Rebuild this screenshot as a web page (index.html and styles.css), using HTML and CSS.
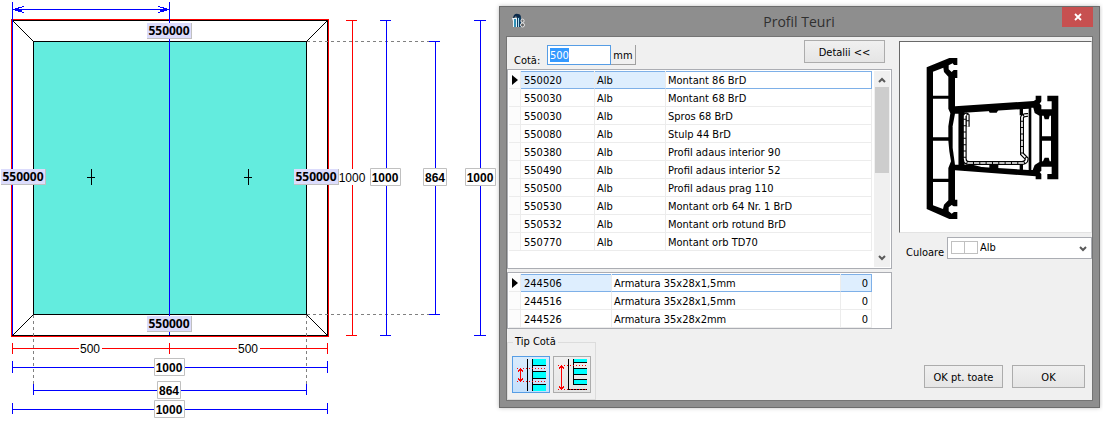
FILE: index.html
```html
<!DOCTYPE html>
<html lang="ro">
<head>
<meta charset="utf-8">
<title>Profil Teuri</title>
<link rel="stylesheet" href="styles.css">
</head>
<body>
<main class="workspace">
  <svg class="drawing" viewBox="0 0 499 423" width="499" height="423" role="img" aria-label="Schiță fereastră 1000 x 1000">
    <!-- glass and frame -->
    <rect x="33" y="41" width="274" height="274" fill="#63ecde"/>
    <g fill="none" shape-rendering="crispEdges">
      <rect x="33.5" y="41.5" width="273" height="273" stroke="#000"/>
      <rect x="12.5" y="20.5" width="315" height="315" stroke="#000"/>
      <path class="red" d="M11.500 19.500H328.500V336.500H11.500Z"/>
      <path stroke="#000" d="M13 21L33 41M327 21L307 41M13 335L33 315M327 335L307 315"/>
      <path class="guide" d="M307 41.500H429M307 314.500H429M33.500 315V384M306.500 315V384"/>
      <path stroke="#000" d="M87 177.500H95M91.500 169V185M244 177.500H252M248.500 169V185"/>
      <path class="blue" d="M12.500 2V335M169.500 2V335M13 9.500H169"/>
      <path class="blue" d="M13 9.500L24 6.500M13 9.500L24 12.500M169 9.500L158 6.500M169 9.500L158 12.500M15 10.500H22M160 10.500H167"/>
      <!-- dimension lines -->
      <path class="red" d="M352.500 20V336M346 20.500H357M346 335.500H357M12 348.500H327M12.500 343V354M169.500 343V354M327.500 343V354"/>
      <path class="blue" d="M386.500 20V336M380 20.500H391M380 335.500H391M435.500 41V315M429 41.500H440M429 314.500H440M480.500 20V336M474 20.500H486M474 335.500H486"/>
      <path class="blue" d="M12 367.500H327M12.500 361V373M327.500 361V373M33 390.500H306M33.500 384V395M306.500 384V395M12 409.500H327M12.500 403V414M327.500 403V414"/>
    </g>
    <g class="tag">
      <path class="tag-edge" d="M147 23h45v16h-45zM147 316h45v16h-45zM1 169h45v16H1zM294 169h45v16h-45z"/>
      <path class="tag-fill" d="M147 23h44v15h-44zM147 316h44v15h-44zM1 169h44v15H1zM294 169h44v15h-44z"/>
      <text x="169" y="35">550000</text>
      <text x="169" y="328">550000</text>
      <text x="23" y="181">550000</text>
      <text x="316" y="181">550000</text>
    </g>
    <g class="plain">
      <path fill="#fff" d="M339 169h28v16h-28zM79 341h23v14H79zM237 341h23v14h-23z"/>
      <text x="352" y="182">1000</text>
      <text x="90" y="353">500</text>
      <text x="248" y="353">500</text>
    </g>
    <g class="dim">
      <path class="dim-box" d="M370.500 168.500h30v17h-30zM423.500 168.500h23v17h-23zM465.500 168.500h30v17h-30zM154.500 358.500h30v17h-30zM157.500 381.500h23v17h-23zM154.500 400.500h30v17h-30z"/>
      <text x="385" y="182">1000</text>
      <text x="435" y="182">864</text>
      <text x="480" y="182">1000</text>
      <text x="169" y="372">1000</text>
      <text x="169" y="395">864</text>
      <text x="169" y="414">1000</text>
    </g>
  </svg>

  <section class="dialog" role="dialog" aria-labelledby="dialog-title">
    <header class="titlebar">
      <svg class="app-icon" viewBox="0 0 14 16" width="14" height="16" aria-hidden="true">
        <path d="M1 5Q2 0 6 1Q9 1 9 5L7 4L5 5L4 3L2 5Z" fill="#0b2a4a"/>
        <path d="M0 5h5v9H1V8z" fill="#e8f4fb"/><path d="M2 6h2v8H2z" fill="#2f8fb5"/>
        <path d="M5 4h4v10H5z" fill="#0d3d63"/><path d="M6 5h1v9H6z" fill="#a8dcf0"/>
        <ellipse cx="10.500" cy="7.800" rx="1.600" ry="1.700" fill="#777" stroke="#e6e6e6"/>
        <ellipse cx="10.500" cy="12" rx="2" ry="2" fill="#666" stroke="#e6e6e6"/>
      </svg>
      <h1 class="title" id="dialog-title">Profil Teuri</h1>
      <button class="close" type="button" aria-label="Închide">
        <svg viewBox="0 0 8 8" width="8" height="8"><path d="M1 1L7 7M7 1L1 7" stroke="#fff" stroke-width="1.800"/></svg>
      </button>
    </header>

    <div class="client">
      <div class="left">
        <div class="toolbar">
          <label class="cota-label" for="cota">Cotă:</label>
          <input class="cota" id="cota" type="text" value="500">
          <button class="unit" type="button">mm</button>
          <button class="btn details" type="button">Detalii &lt;&lt;</button>
        </div>

        <div class="list profiles">
          <table class="grid">
            <colgroup><col class="c-mark"><col class="c-code"><col class="c-color"><col></colgroup>
            <tbody>
              <tr class="current"><td><i class="marker"></i></td><td class="hl">550020</td><td class="hl">Alb</td><td>Montant 86 BrD</td></tr>
              <tr><td></td><td>550030</td><td>Alb</td><td>Montant 68 BrD</td></tr>
              <tr><td></td><td>550030</td><td>Alb</td><td>Spros 68 BrD</td></tr>
              <tr><td></td><td>550080</td><td>Alb</td><td>Stulp 44 BrD</td></tr>
              <tr><td></td><td>550380</td><td>Alb</td><td>Profil adaus interior 90</td></tr>
              <tr><td></td><td>550490</td><td>Alb</td><td>Profil adaus interior 52</td></tr>
              <tr><td></td><td>550500</td><td>Alb</td><td>Profil adaus prag 110</td></tr>
              <tr><td></td><td>550530</td><td>Alb</td><td>Montant orb 64 Nr. 1 BrD</td></tr>
              <tr><td></td><td>550532</td><td>Alb</td><td>Montant orb rotund BrD</td></tr>
              <tr><td></td><td>550770</td><td>Alb</td><td>Montant orb TD70</td></tr>
            </tbody>
          </table>
          <div class="scroll" aria-hidden="true">
            <svg viewBox="0 0 8 6" width="8" height="6"><path d="M1 5L4 2L7 5" class="chev"/></svg>
            <div class="track"><div class="thumb"></div></div>
            <svg viewBox="0 0 8 6" width="8" height="6"><path d="M1 1L4 4L7 1" class="chev"/></svg>
          </div>
        </div>

        <div class="list steels">
          <table class="grid">
            <colgroup><col class="c-mark"><col class="c-steel"><col><col class="c-qty"></colgroup>
            <tbody>
              <tr class="current"><td><i class="marker"></i></td><td class="hl">244506</td><td>Armatura 35x28x1,5mm</td><td class="hl num">0</td></tr>
              <tr><td></td><td>244516</td><td>Armatura 35x28x1,5mm</td><td class="num">0</td></tr>
              <tr><td></td><td>244526</td><td>Armatura 35x28x2mm</td><td class="num">0</td></tr>
            </tbody>
          </table>
        </div>

        <fieldset class="kind">
          <legend>Tip Cotă</legend>
          <button class="kind-btn active" type="button" aria-label="Cotă la ax" aria-pressed="true">
            <svg viewBox="24 21 108 105" width="36" height="35" shape-rendering="crispEdges">
              <path fill="#0ff" d="M84 27h39v18H84zM84 66h39v18H84zM84 105h39v18H84z"/>
              <path d="M66 27h3v96h-3zM81 27h3v96h-3zM84 45h39v3H84zM84 63h39v3H84zM84 84h39v3H84zM84 102h39v3H84z"/>
              <path class="dots" d="M36 55.500H123M36 94.500H123"/>
              <path class="arrow" d="M46.500 57V93M39 64.500L46.500 57L54 64.500M39 85.500L46.500 93L54 85.500"/>
            </svg>
          </button>
          <button class="kind-btn" type="button" aria-label="Cotă la exterior" aria-pressed="false">
            <svg viewBox="144 21 108 105" width="36" height="35" shape-rendering="crispEdges">
              <path fill="#0ff" d="M204 27h39v9h-39zM204 57h39v15h-39zM204 90h39v12h-39z"/>
              <path d="M186 27h3v90h54v3h-57zM201 27h3v75h39v3h-42zM204 36h39v3h-39zM204 54h39v3h-39zM204 72h39v3h-39zM204 87h39v3h-39z"/>
              <path class="dots" d="M156 46.500H243M156 118.500H243"/>
              <path class="arrow" d="M166.500 48V117M159 55.500L166.500 48L174 55.500M159 109.500L166.500 117L174 109.500"/>
            </svg>
          </button>
        </fieldset>
      </div>

      <div class="right">
        <div class="preview">
          <svg viewBox="17 22 570 570" width="190" height="190" role="img" aria-label="Secțiune profil">
            <path d="M97 98L165 70H189V91H179L175 86L163 92V104L172 112L178 106H189V130H182V215L418 199L424 195V183H441V200L436 207L441 212V224H472V200H459V183H492V434H459V418H472V396H441V409L436 412L441 418V434H424V425L182 407V495H189V515H178L172 511L163 518V530L172 537L179 532H189V553H165L97 523Z"/>
            <g fill="#fff">
              <path d="M116 111L147 99L149 112L162 126V183H116ZM116 192H162V222L168 236L162 275V308H116ZM116 318H162L165 350L170 380L162 400V432H116ZM116 442H162V497L149 510L146 523L116 512Z"/>
              <path d="M182 237H193V390H182L175 340V275Z"/>
              <path d="M210 234L403 222V406L210 394Z"/>
              <path d="M411 219H417L421 235L435 243V382L421 391L415 406H411Z"/>
              <path d="M443 243H448L451 254H463L466 243H470V305H443ZM443 318H470V380H466L463 369H451L446 380H443Z"/>
            </g>
            <path d="M193 232H210V396H193ZM282 226H312L307 234H286ZM285 388H312V402H285ZM376 222H386V242H376ZM376 386H386V406H376ZM210 390H235L285 403H210Z"/>
            <path class="steel" d="M220 276V242Q216 237 211 243V372Q211 385 224 385H384Q398 383 397 372L383 358V248Q386 240 401 241"/>
            <path class="steel-core" d="M220 276V242Q216 237 211 243V372Q211 385 224 385H384Q398 383 397 372L383 358V248Q386 240 401 241"/>
          </svg>
        </div>
        <div class="color-row">
          <label for="culoare">Culoare</label>
          <div class="combo">
            <select id="culoare"><option>Alb</option></select>
            <span class="swatch"></span>
            <svg class="combo-arrow" viewBox="0 0 8 6" width="8" height="6" aria-hidden="true"><path d="M1 1L4 4L7 1" class="chev"/></svg>
          </div>
        </div>
        <div class="actions">
          <button class="btn all" type="button">OK pt. toate</button>
          <button class="btn ok" type="button">OK</button>
        </div>
      </div>
    </div>
  </section>
</main>
</body>
</html>
```
FILE: styles.css
```css
* { box-sizing: border-box; }

body {
  margin: 0;
  background: #fff;
  color: #000;
  font: 11px/14px Tahoma, "DejaVu Sans Condensed", sans-serif;
}

button, input, select { font: inherit; color: inherit; margin: 0; }

.workspace { display: flex; align-items: flex-start; }

/* Window drawing */
.drawing { display: block; flex: none; }
.red { stroke: #f00; }
.blue { stroke: #00f; }
.guide { stroke: #808080; stroke-dasharray: 3 3; }
.drawing text { text-anchor: middle; font: 12px "Liberation Sans", Arial, sans-serif; }
.drawing .tag text { font: bold 12px "Noto Sans", Tahoma, sans-serif; }
.drawing .dim text { font-weight: bold; }
.tag-edge { fill: #c0c0c0; }
.tag-fill { fill: #dcdcfc; }
.dim-box { fill: #fff; stroke: #c0c0c0; }

/* Dialog */
.dialog {
  flex: 1;
  margin: 6px 3px 0 0;
  padding: 0 6px 6px;
  background: #8e8e8e;
  border: 1px solid #6c6c6c;
  box-shadow: 0 0 4px rgba(0, 0, 0, 0.25);
}
.titlebar { display: flex; align-items: flex-start; height: 29px; }
.app-icon { margin: 6px 10px 0 6px; }
.title {
  flex: 1;
  margin: 0;
  text-align: center;
  font: 14px/29px "Open Sans", "Segoe UI", sans-serif;
  color: #303030;
}
.close {
  display: flex;
  align-items: center;
  justify-content: center;
  width: 31px;
  height: 20px;
  padding: 0;
  border: 0;
  background: #c75050;
}
.client {
  display: flex;
  gap: 7px;
  border: 1px solid #747474;
  background: #f0f0f0;
}
.left { flex: 1; min-width: 0; }
.right { display: flex; flex-direction: column; flex: none; width: 193px; padding-top: 4px; }

.toolbar { display: flex; height: 32px; padding: 3px 7px 0; align-items: flex-start; }
.cota-label { width: 33px; margin-top: 14px; }
.cota {
  width: 64px;
  height: 20px;
  margin-top: 5px;
  padding: 0 2px;
  border: 1px solid #569de5;
  background: linear-gradient(#39f, #39f) 2px 2px / 19px 14px no-repeat #fff;
  color: #fff;
  outline: 0;
}
.unit {
  width: 25px;
  height: 20px;
  margin-top: 5px;
  padding: 2px 0 0;
  border: 1px solid #a0a0a0;
  border-width: 0 1px 1px 0;
  background: #f0f0f0;
}
.btn {
  height: 23px;
  padding: 2px 0 0;
  border: 1px solid #acacac;
  background: linear-gradient(#f0f0f0, #e5e5e5);
}
.details { width: 81px; margin-left: auto; }

.list { display: flex; align-items: flex-start; padding: 1px; border: 1px solid #abadb3; background: #fff; }
.profiles { height: 200px; }
.steels { height: 57px; margin-top: 3px; padding-right: 19px; }
.grid { flex: 1; width: 100%; table-layout: fixed; border-collapse: separate; border-spacing: 0; }
.grid td {
  height: 18px;
  padding: 2px 2px 0;
  border-right: 1px solid #ececec;
  border-bottom: 1px solid #ececec;
  line-height: 15px;
  white-space: nowrap;
}
.grid td:nth-child(2) { padding-left: 3px; }
.grid td:first-child { padding: 0 0 0 3px; background: #fcfcfc; }
.current td { border-bottom-color: #7eb0e8; box-shadow: inset 0 1px #7eb0e8; }
.current td:first-child { border-bottom-color: #ececec; box-shadow: none; }
.current td:last-child { border-right-color: #7eb0e8; }
.grid .hl { background: #deeefe; }
.grid .num { padding-right: 3px; text-align: right; }
.marker {
  display: block;
  width: 6px;
  border-left: 6px solid #000;
  border-top: 5px solid transparent;
  border-bottom: 5px solid transparent;
}
.c-mark { width: 12px; }
.c-code { width: 74px; }
.c-color { width: 71px; }
.c-steel { width: 91px; }
.c-qty { width: 31px; }

.scroll {
  display: flex;
  flex-direction: column;
  align-items: center;
  width: 16px;
  height: 196px;
  margin-left: 2px;
  padding: 6px 0;
  background: #f0f0f0;
}
.track { flex: 1; width: 14px; padding-top: 4px; }
.thumb { height: 86px; background: #cdcdcd; }
.chev { fill: none; stroke: #5a5a5a; stroke-width: 2; }

.kind {
  display: flex;
  gap: 3px;
  width: 89px;
  height: 65px;
  margin: 6px 0 0;
  padding: 7px 4px 0;
  border: 1px solid #dcdcdc;
}
.kind legend { margin-left: 1px; padding: 0 2px; line-height: 14px; }
.kind-btn { flex: none; width: 38px; height: 37px; padding: 0; border: 1px solid #acacac; background: linear-gradient(#f0f0f0, #e5e5e5); }
.kind-btn svg { display: block; }
.kind-btn.active { border-color: #569de5; background: linear-gradient(#daebfc, #c4e0fc); }
.dots { stroke: #f00; stroke-width: 3; stroke-dasharray: 3 6; fill: none; }
.arrow { stroke: #f00; stroke-width: 3; fill: none; }

.preview {
  height: 192px;
  border: 1px solid #696969;
  border-right-color: #e3e3e3;
  border-bottom-color: #e3e3e3;
  background: #fff;
}
.preview svg { display: block; }
.steel { fill: none; stroke: #000; stroke-width: 12; }
.steel-core { fill: none; stroke: #fff; stroke-width: 5; stroke-dasharray: 16 3; }

.color-row { display: flex; justify-content: space-between; margin-top: 4px; padding-left: 7px; }
.color-row label { margin-top: 9px; }
.combo { position: relative; width: 145px; height: 22px; }
.combo select {
  width: 100%;
  height: 100%;
  padding: 0 20px 0 32px;
  border: 1px solid #abadb3;
  border-radius: 0;
  background: #fff;
  appearance: none;
}
.swatch {
  position: absolute;
  left: 4px;
  top: 4px;
  width: 27px;
  height: 13px;
  border: 1px solid #c0c0c0;
  background: linear-gradient(#c0c0c0, #c0c0c0) 12px 0 / 1px 100% no-repeat;
  pointer-events: none;
}
.combo-arrow { position: absolute; right: 5px; top: 9px; pointer-events: none; }

.actions { display: flex; justify-content: flex-end; gap: 9px; margin-top: auto; padding: 0 7px 12px 0; }
.all { width: 79px; }
.ok { width: 73px; }
```
